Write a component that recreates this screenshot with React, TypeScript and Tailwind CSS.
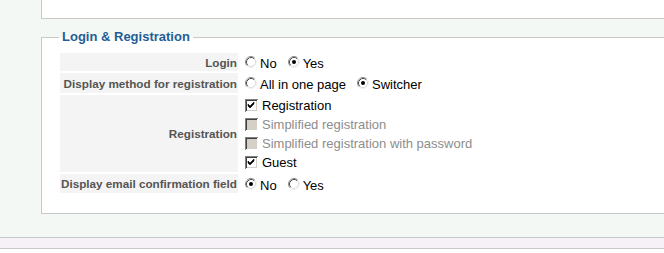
import type { ReactNode } from "react"

const font = { fontFamily: '"Liberation Sans", Arial, sans-serif' }

function Radio({ checked = false }: { checked?: boolean }) {
  return (
    <svg width="12" height="12" viewBox="0 0 12 12" className="shrink-0">
      <circle cx="6" cy="6" r="5" fill="#fff" />
      <path d="M2.11 9.89 A5.5 5.5 0 0 1 9.89 2.11" fill="none" stroke="#8c8c8c" strokeWidth="1" />
      <path d="M9.89 2.11 A5.5 5.5 0 0 1 2.11 9.89" fill="none" stroke="#f0f0f0" strokeWidth="1" />
      <path d="M2.82 9.18 A4.5 4.5 0 0 1 9.18 2.82" fill="none" stroke="#505050" strokeWidth="1" />
      <path d="M9.18 2.82 A4.5 4.5 0 0 1 2.82 9.18" fill="none" stroke="#dcdcdc" strokeWidth="1" />
      {checked && <circle cx="6" cy="6" r="2" fill="#000" />}
    </svg>
  )
}

function Checkbox({ checked = false, disabled = false }: { checked?: boolean; disabled?: boolean }) {
  return (
    <svg width="13" height="13" viewBox="0 0 13 13" className="shrink-0" shapeRendering="crispEdges">
      <rect x="0" y="0" width="13" height="13" fill={disabled ? "#d4d0c8" : "#fff"} />
      <path d="M0.5 12.5 V0.5 H12.5" fill="none" stroke="#808080" />
      <path d="M12.5 0.5 V12.5 H0.5" fill="none" stroke="#ffffff" />
      <path d="M1.5 11.5 V1.5 H11.5" fill="none" stroke="#404040" />
      <path d="M11.5 1.5 V11.5 H1.5" fill="none" stroke="#d4d0c8" />
      {checked && (
        <path d="M3 5 L5 7 L9 3 V5 L5 9 L3 7 Z" fill="#000" stroke="#000" strokeWidth="0.6" shapeRendering="auto" />
      )}
    </svg>
  )
}

function RadioOption({ label, checked, first }: { label: string; checked?: boolean; first?: boolean }) {
  return (
    <span className={first ? "flex items-center gap-[3px]" : "flex items-center gap-[3px] ml-[11px]"}>
      <Radio checked={checked} />
      <span className="pt-[4px] leading-[14px]">{label}</span>
    </span>
  )
}

function CheckOption({ label, checked, disabled }: { label: string; checked?: boolean; disabled?: boolean }) {
  return (
    <div className="flex items-center gap-[4px] h-[19px]">
      <Checkbox checked={checked} disabled={disabled} />
      <span className={disabled ? "text-[#8d8d8d]" : "text-black"}>{label}</span>
    </div>
  )
}

function Row({ label, height, children }: { label: string; height: string; children: ReactNode }) {
  return (
    <>
      <div
        className={`flex items-center justify-end whitespace-nowrap bg-[#f4f4f4] pr-[1px] text-[11.7px] font-bold text-[#555] ${height}`}
      >
        {label}
      </div>
      <div className="flex flex-col justify-center pl-[5px] text-[13px] text-black whitespace-nowrap">{children}</div>
    </>
  )
}

export default function App() {
  return (
    <div className="w-[664px] h-[253px] overflow-hidden bg-[#f4f8f4] flex flex-col" style={font}>
      <div className="ml-[41px] h-[19px] shrink-0 bg-white border-l border-b border-[#c8c8c8]" />

      <fieldset className="ml-[41px] mt-[10px] w-[660px] shrink-0 bg-white border border-[#c8c8c8] pl-[18px] pt-[8px] pb-[20px]">
        <legend className="ml-[-1px] px-[3px] text-[13px] leading-[16px] font-bold text-[#1f5d96]">
          Login &amp; Registration
        </legend>
        <div className="grid grid-cols-[178px_auto] gap-[2px] w-max leading-[15px]">
          <Row label="Login" height="h-[18px]">
            <div className="flex items-center">
              <RadioOption label="No" first />
              <RadioOption label="Yes" checked />
            </div>
          </Row>
          <Row label="Display method for registration" height="h-[20px]">
            <div className="flex items-center">
              <RadioOption label="All in one page" first />
              <RadioOption label="Switcher" checked />
            </div>
          </Row>
          <Row label="Registration" height="h-[77px]">
            <div className="flex flex-col pt-[1px]">
              <CheckOption label="Registration" checked />
              <CheckOption label="Simplified registration" disabled />
              <CheckOption label="Simplified registration with password" disabled />
              <CheckOption label="Guest" checked />
            </div>
          </Row>
          <Row label="Display email confirmation field" height="h-[19px]">
            <div className="flex items-center">
              <RadioOption label="No" checked first />
              <RadioOption label="Yes" />
            </div>
          </Row>
        </div>
      </fieldset>

      <div className="mt-[23px] h-[12px] shrink-0 bg-[#f6f1f6] border-t border-b border-[#c8c8c8]" />
      <div className="flex-1 bg-white" />
    </div>
  )
}
